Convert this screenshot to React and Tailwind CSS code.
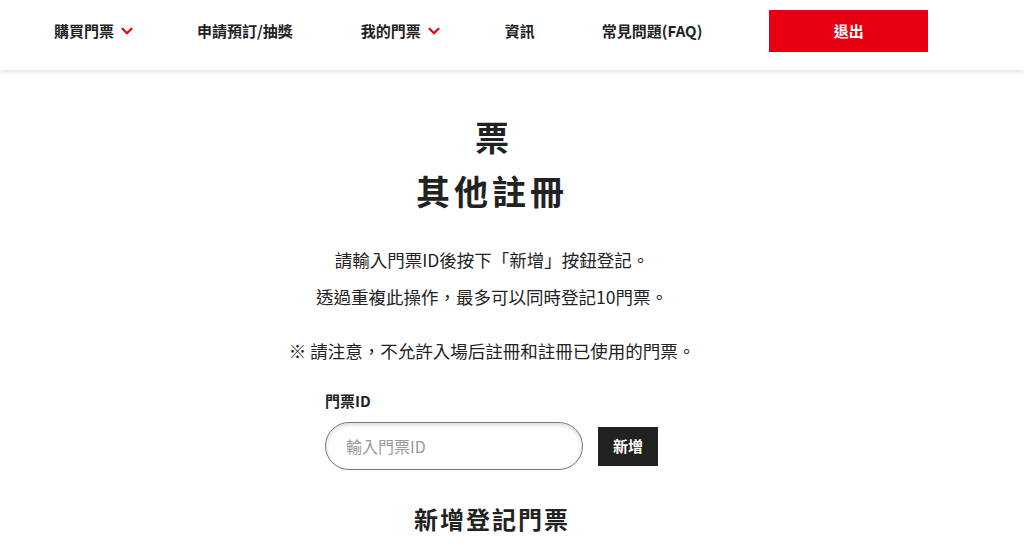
import { ChevronDown } from 'lucide-react';

const font = { fontFamily: '"Noto Sans CJK TC", "Noto Sans", sans-serif' };

function NavItem({ label, menu }) {
  return (
    <a className="flex items-center gap-1 text-[15px] font-bold text-[#222]">
      {label}
      {menu && <ChevronDown size={18} strokeWidth={3} className="text-[#e60012]" />}
    </a>
  );
}

export default function App() {
  return (
    <div className="min-h-[552px] bg-white text-[#222]" style={font}>
      <header className="flex h-[70px] items-center bg-white pb-[8px] shadow-[0_2px_4px_rgba(0,0,0,0.12)]">
        <nav className="flex items-center pl-[54px]">
          <NavItem label="購買門票" menu />
          <div className="ml-[61px]"><NavItem label="申請預訂/抽獎" /></div>
          <div className="ml-[68px]"><NavItem label="我的門票" menu /></div>
          <div className="ml-[62px]"><NavItem label="資訊" /></div>
          <div className="ml-[67px]"><NavItem label="常見問題(FAQ)" /></div>
          <button className="ml-[67px] h-[42px] w-[159px] bg-[#e60012] text-[15px] font-bold text-white">退出</button>
        </nav>
      </header>

      <main className="flex flex-col items-center pr-[40px] pt-[47px]">
        <h1 className="text-[34px] font-bold leading-[40px]">票</h1>
        <h2 className="mt-[14px] text-[34px] font-bold leading-[40px] tracking-[4px]">其他註冊</h2>
        <p className="mt-[36px] text-[17.5px] leading-[26px]">請輸入門票ID後按下「新增」按鈕登記。</p>
        <p className="mt-[11px] text-[17.5px] leading-[26px]">透過重複此操作，最多可以同時登記10門票。</p>
        <p className="mt-[28px] text-[17.5px] leading-[26px]">※ 請注意，不允許入場后註冊和註冊已使用的門票。</p>

        <div className="mt-[27px] w-[334px]">
          <label className="block text-[15px] font-bold leading-[20px]">門票ID</label>
          <div className="mt-[11px] flex items-center gap-[15px]">
            <input
              placeholder="輸入門票ID"
              className="h-[48px] w-[258px] rounded-full border border-[#777] px-[20px] text-[16px] shadow-[inset_0_2px_4px_rgba(0,0,0,0.15)] outline-none placeholder:text-[#999]"
              style={font}
            />
            <button className="h-[39px] w-[60px] bg-[#222] text-[15px] font-bold text-white">新增</button>
          </div>
        </div>

        <h3 className="mt-[33px] text-[24px] font-bold leading-[32px] tracking-[2px]">新增登記門票</h3>
      </main>
    </div>
  );
}
